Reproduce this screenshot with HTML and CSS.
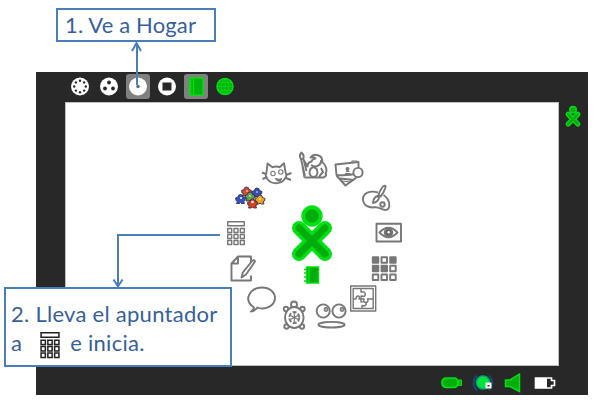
FILE: index.html
```html
<!DOCTYPE html>
<html lang="es">
<head>
<meta charset="utf-8">
<title>Hogar</title>
<link rel="stylesheet" href="styles.css">
</head>
<body>
<main class="desktop">
  <header class="toolbar">
    <span class="tool"><svg viewBox="0 0 24 24"><circle class="w" cx="12" cy="12" r="9"/><g class="d"><circle cx="12" cy="6.2" r="1.2"/><circle cx="16.1" cy="7.9" r="1.2"/><circle cx="17.8" cy="12" r="1.2"/><circle cx="16.1" cy="16.1" r="1.2"/><circle cx="12" cy="17.8" r="1.2"/><circle cx="7.9" cy="16.1" r="1.2"/><circle cx="6.2" cy="12" r="1.2"/><circle cx="7.9" cy="7.9" r="1.2"/></g></svg></span>
    <span class="tool"><svg viewBox="0 0 24 24"><circle class="w" cx="12" cy="12" r="9"/><g class="d"><circle cx="12" cy="8" r="1.900"/><circle cx="8" cy="14" r="1.900"/><circle cx="16" cy="14" r="1.900"/></g></svg></span>
    <span class="tool active"><svg viewBox="0 0 24 24"><circle class="w" cx="12" cy="12" r="9"/><circle cx="12" cy="12" r="1.7" fill="#4b6f91"/></svg></span>
    <span class="tool"><svg viewBox="0 0 24 24"><circle class="w" cx="12" cy="12" r="9"/><rect class="d" x="7.5" y="8" width="9" height="8"/></svg></span>
    <span class="tool active"><svg viewBox="0 0 24 24"><path d="M6 3.500h13v17H6z" fill="#00b20d" stroke="#00e012" stroke-width="1.400"/><path d="M9.500 4v16M4.500 6h3M4.500 9h3M4.500 12h3M4.500 15h3M4.500 18h3" stroke="#00e012" stroke-width="1.300"/></svg></span>
    <span class="tool"><svg viewBox="0 0 24 24"><circle cx="12" cy="12" r="8" fill="#00b20d" stroke="#00e012" stroke-width="1.500"/><path d="M12 4v16M4 12h16M5.500 8h13M5.500 16h13M12 4c-5 4-5 12 0 16M12 4c5 4 5 12 0 16" fill="none" stroke="#00e012" stroke-width=".7"/></svg></span>
  </header>
  <section class="canvas">
    <svg viewBox="65 102 494 264">
      <defs>
        <g id="buddy">
          <path d="M299 228L325 254M325 228L299 254" stroke="#00e012" stroke-width="14" stroke-linecap="round"/>
          <path d="M299 228L325 254M325 228L299 254" stroke="#00ad0c" stroke-width="7" stroke-linecap="round"/>
          <circle cx="312" cy="216" r="8.700" fill="#00ad0c" stroke="#00e012" stroke-width="4"/>
        </g>
        <g id="calc">
          <path d="M227.700 221.700h16.600v4h-16.600z"/>
          <path d="M227.700 228.500h4v4h-4zM234 228.500h4v4h-4zM240.300 228.500h4v4h-4zM227.700 234.500h4v4h-4zM234 234.500h4v4h-4zM240.300 234.500h4v4h-4zM227.700 240.500h4v4h-4zM234 240.500h4v4h-4zM240.300 240.500h4v4h-4z"/>
        </g>
        <g id="person">
          <path d="M-2.500-1.500a2.500 2.500 0 1 1 5 0l2.500 1-.5 2.500-1.500.5 1 2.500h-3l-1-1-1 1h-3l1-2.500-1.500-.5-.5-2.500z"/>
        </g>
      </defs>
      <use href="#buddy"/>
      <path d="M306.500 267h12v16h-12z" fill="#00ad0c" stroke="#00e012" stroke-width="1.500"/>
      <path d="M309 267v16M304 269.500h3M304 273h3M304 277h3M304 281h3" stroke="#00e012" stroke-width="1.500"/>

      <g class="line">
        <!-- cat -->
        <path d="M267.500 163.500l5 3.700q4-1.500 7 0l4.500-4 1.500 9q2 4-1 7-3 4-8.500 4t-8.500-4q-3-4-1-7zM262 172.500l5 2M262.500 179l5-2M286 175l5.500-2M286 178l5 2"/>
        <g class="fine"><circle cx="273" cy="173.500" r="2.200"/><circle cx="280.800" cy="172" r="2.200"/>
        <path d="M275.500 178.500q4 1.500 6 0l-1 2.500q-3 1-5-2.500z" fill="#777"/></g>
        <!-- gnu and brush -->
        <path d="M301.500 152.500q-3 3-.5 6.500l2 0q2-3-1.500-6.500zM301 159l4 17M303.500 159l3 12M304.500 177.500h19q4-2 2-4 2-3 0-7-1-3-3-4 0-6-4-7-5-2-8 2 4-1 5 1-3 0-4 3-4 1-4 5l-4-7M304.500 177.500l-2-11M311 165q5 3 8 0 3-2 2-5"/>
        <path d="M313.500 167q-4 1-4 6 1 4 4 4t4-4q0-5-4-6M319 177q2-3 4-5l-2-4"/>
        <!-- bills -->
        <path d="M335.500 164.500l23-2.500v11q-10 3-22 2zM336.500 175.500l9 10 11-8M340 178.500l14 1.500"/><path class="fine" d="M342 181l9 1M352 163v-2h5v2"/>
        <circle cx="358" cy="172.500" r="4.600" fill="#fff"/>
        <g class="fine"><circle cx="347.500" cy="169" r="1.400" fill="#777"/><path d="M345 173.500h5.500M346 171.500h3.500"/></g>
        <!-- palette -->
        <path d="M378 192.500c-8-2.500-15 .5-15 6.500 0 6.500 6 9 11.500 8.300 5-.6 7 2.700 11 2.700 4.500 0 5-6.500 2-11q-1.500-2.500-4-4"/>
        <circle cx="382.500" cy="204.500" r="2.200"/>
        <path d="M383 186.500q3-2 2.500 1-1.500 5-5 9l-2-1.500q1.500-5 4.500-8.500zM377.500 196q-4 1-4.500 7 5-1 6-5z" fill="#fff"/>
        <!-- eye -->
        <rect x="376.500" y="223.700" width="24.500" height="17.800"/>
        <path d="M379.500 232.500q9-9.500 18 0-9 9.500-18 0z" fill="#fff"/><circle cx="388.500" cy="232.500" r="3.800" fill="#666"/><circle cx="388.700" cy="232.300" r="1.200" fill="#fff" stroke="none"/>
        <!-- grid -->
        <path d="M372.800 257.300h5.500v5.500h-5.500zM390.200 257.300h5.500v5.500h-5.500zM372.800 265.800h5.500v5.500h-5.500zM381.500 265.800h5.500v5.500h-5.500z" fill="#777"/>
        <path d="M381.500 257.300h5.500v5.500h-5.500zM390.200 265.800h5.500v5.500h-5.500zM372.800 274.500h5.500v5.500h-5.500zM381.500 274.500h5.500v5.500h-5.500zM390.200 274.500h5.500v5.500h-5.500z"/>
        <!-- puzzle -->
        <g class="thin"><rect x="350.700" y="286" width="25" height="25"/><rect x="353.200" y="288.500" width="20" height="20"/>
        <path d="M361 289v3q3-1 4 1t-1 3.500l-3-.5v3h3q-1 4 2 3.500t1.500-3.500h6M361 299h-2q1-3-1-3t-2 3h-3M361 299v3q4-1 5 1t-2 3l-2-.5v3"/></g>
        <!-- eyes and mouth -->
        <circle cx="323.200" cy="311" r="6.600"/><circle cx="339" cy="311" r="6.600"/><g class="fine" fill="#aaa"><circle cx="326" cy="309.500" r="1.900"/><circle cx="342" cy="309.500" r="1.900"/></g><ellipse cx="331.500" cy="324.700" rx="13" ry="2.800"/>
        <!-- turtle -->
        <circle cx="294" cy="304.500" r="3"/><circle cx="286" cy="309" r="2.200"/><circle cx="302.500" cy="309" r="2.200"/><circle cx="286.500" cy="326.500" r="2.200"/><circle cx="302" cy="326.500" r="2.200"/>
        <ellipse cx="294.300" cy="317.500" rx="9.300" ry="10.500" fill="#fff"/><ellipse cx="294.300" cy="317.500" rx="5" ry="5.500" stroke-dasharray="4 1.600"/><path class="fine" d="M294.300 313v9M290.500 315.500l7.600 4M298 315.500l-7.600 4"/>
        <!-- speech -->
        <path d="M254 307.500c-12-8-3-20 8-20 8 0 13 5 13 10.500s-5 10.500-13 10.500q-3 0-4.500-1-2 3-6.500 4 3-2 3-4z"/>
        <!-- document -->
        <path d="M251 265v-8.500h-13l-6.500 7v17H251v-5M238 257v6.500h-6.500"/>
        <path d="M252.500 260.500q2-1 2.500 1l-9 13-4.500 3 1.300-5z" fill="#fff"/>
        <use class="thin" href="#calc"/>
      </g>
      <!-- colored group -->
      <g stroke="#343052" stroke-width=".9">
        <use href="#person" x="246.500" y="191" fill="#d74b2d"/><use href="#person" x="257" y="192" fill="#334db9"/>
        <use href="#person" x="240.500" y="198.500" fill="#3153c6"/><use href="#person" x="260" y="199" fill="#f0a41c"/>
        <use href="#person" x="250" y="196" fill="#61a34b"/><use href="#person" x="252.500" y="203" fill="#e23b16"/>
      </g>
      <g fill="#fff"><circle cx="241" cy="198" r="1"/><circle cx="247" cy="191" r=".8"/><circle cx="257" cy="192" r=".8"/><circle cx="250" cy="196" r=".8"/><circle cx="252.500" cy="202" r="1.300"/><circle cx="260" cy="199" r=".8"/></g>
    </svg>
  </section>
  <aside class="friends">
    <svg viewBox="294 203 36 59"><use href="#buddy"/></svg>
  </aside>
  <footer class="tray">
    <svg viewBox="0 0 22 22"><rect x="1" y="6" width="16" height="9.500" rx="4" fill="#00ad0c" stroke="#00e012" stroke-width="1.700"/><path d="M17.500 8h3v5.500h-3z" fill="#00ad0c" stroke="#00e012"/></svg>
    <svg viewBox="0 0 22 22"><path d="M5 3.500q-7 7.500 0 15M17 3.500q7 7.500 0 15" fill="none" stroke="#134e87" stroke-width="1.500"/><circle cx="11" cy="10.500" r="6.500" fill="#00e33b" stroke="#08a875" stroke-width="1.500"/><path d="M13.500 10.500h6v6h-6z" fill="#fff"/><path d="M15.500 13h2v1.500h-2z" fill="#333"/></svg>
    <svg viewBox="0 0 22 22"><path d="M2.500 8h4.500L16.500 2v17.500L7 14.500H2.500z" fill="#00ad0c" stroke="#00e012" stroke-width="1.500"/></svg>
    <svg viewBox="0 0 22 22"><path d="M1.500 6h16v2.500h3v5h-3V16h-16z" fill="none" stroke="#fff" stroke-width="1.600"/><path d="M2 6h11v10H2z" fill="#fff"/></svg>
  </footer>
</main>
<svg class="arrows" viewBox="0 0 597 400">
  <path d="M137 85V44M132 51l4.500-8 4.500 8M220 235H118v51M113.500 279.500l4.500 7 4.500-7"/>
</svg>
<div class="callout first">1. Ve a Hogar</div>
<div class="callout second">
  <div class="row">2. Lleva el apuntador</div>
  <div class="row"><span>a</span><svg class="key" viewBox="226 220 20 26"><use href="#calc"/></svg><span>e inicia.</span></div>
</div>
</body>
</html>
```
FILE: styles.css
```css
* { box-sizing: border-box; }
body {
  margin: 0;
  width: 597px;
  height: 400px;
  position: relative;
  overflow: hidden;
  background: #fff;
  color: #365f9b;
  font-family: Lato, "Liberation Sans", sans-serif;
}
svg { display: block; }
.desktop {
  display: grid;
  grid-template: 30px 264px 29px / 29px 494px 29px;
  width: 552px;
  margin: 72px 0 0 36px;
  background: #282828;
}
.toolbar {
  grid-area: 1 / 2 / 2 / 4;
  display: flex;
  gap: 5.2px;
  padding: 2px 0 0 2.5px;
}
.tool {
  width: 24px;
  height: 25px;
  border-radius: 3px;
}
.tool svg { width: 24px; height: 25px; }
.active { background: #808080; }
.w { fill: #fff; }
.d { fill: #282828; }
.canvas {
  grid-area: 2 / 2;
  background: #fff;
  border: 1px solid #c0c0c0;
}
.canvas svg { width: 494px; height: 264px; margin: -1px; }
.line { fill: none; stroke: #777; stroke-width: 1.9; stroke-linejoin: round; }
.thin { stroke-width: 1.4; }
.fine { stroke-width: 1.1; }
.friends { grid-area: 2 / 3; padding: 3px 0 0 6px; }
.friends svg { width: 16px; height: 22px; overflow: visible; }
.tray {
  grid-area: 3 / 2 / 4 / 4;
  display: flex;
  justify-content: flex-end;
  gap: 9px;
  padding: 6px 32px 0 0;
}
.tray svg { width: 22px; height: 22px; }
.arrows {
  position: absolute;
  inset: 0;
  width: 597px;
  height: 400px;
  fill: none;
  stroke: #4a7ebb;
  stroke-width: 2;
}
.callout {
  position: absolute;
  background: #fff;
  border: 2px solid #4a7ebb;
  font-size: 22px;
  letter-spacing: 0.15px;
  white-space: nowrap;
}
.first {
  left: 56px;
  top: 8px;
  width: 160px;
  height: 34px;
  padding-left: 7px;
  line-height: 30px;
}
.second {
  left: 4px;
  top: 287px;
  width: 228px;
  height: 80px;
  padding: 10px 0 0 5px;
  letter-spacing: 0.27px;
}
.row { display: flex; height: 29px; line-height: 29px; }
.key {
  width: 22px;
  height: 28px;
  margin: 3px 9px 0 17px;
  fill: none;
  stroke: #222;
  stroke-width: 1.4;
}
```
